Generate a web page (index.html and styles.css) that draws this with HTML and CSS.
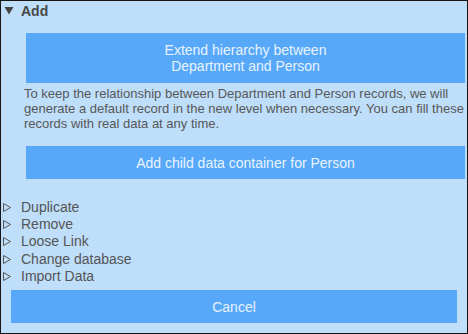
FILE: index.html
```html
<!DOCTYPE html>
<html>
<head>
<meta charset="utf-8">
<link rel="stylesheet" href="styles.css">
</head>
<body>
<div class="panel">
  <div class="section-head">
    <svg class="tri-down" width="11" height="9" viewBox="0 0 11 9"><polygon points="1.5,1 10.5,1 6,8.5" fill="#444"/></svg>
    <span>Add</span>
  </div>
  <div class="add-body">
    <button class="btn btn-tall">Extend hierarchy between<br>Department and Person</button>
    <p class="note">To keep the relationship between Department and Person records, we will generate a default record in the new level when necessary. You can fill these records with real data at any time.</p>
    <button class="btn btn-child">Add child data container for Person</button>
  </div>
  <ul class="actions">
    <li><svg class="tri-right" width="10" height="11" viewBox="0 0 10 11"><polygon points="1.5,1.5 8.5,5.5 1.5,9.5" fill="none" stroke="#555" stroke-width="1"/></svg>Duplicate</li>
    <li><svg class="tri-right" width="10" height="11" viewBox="0 0 10 11"><polygon points="1.5,1.5 8.5,5.5 1.5,9.5" fill="none" stroke="#555" stroke-width="1"/></svg>Remove</li>
    <li><svg class="tri-right" width="10" height="11" viewBox="0 0 10 11"><polygon points="1.5,1.5 8.5,5.5 1.5,9.5" fill="none" stroke="#555" stroke-width="1"/></svg>Loose Link</li>
    <li><svg class="tri-right" width="10" height="11" viewBox="0 0 10 11"><polygon points="1.5,1.5 8.5,5.5 1.5,9.5" fill="none" stroke="#555" stroke-width="1"/></svg>Change database</li>
    <li><svg class="tri-right" width="10" height="11" viewBox="0 0 10 11"><polygon points="1.5,1.5 8.5,5.5 1.5,9.5" fill="none" stroke="#555" stroke-width="1"/></svg>Import Data</li>
  </ul>
  <button class="btn btn-cancel">Cancel</button>
</div>
</body>
</html>
```

FILE: styles.css
```css
html, body {
  margin: 0;
  padding: 0;
}
body {
  font-family: "Liberation Sans", Arial, sans-serif;
}
.panel {
  width: 468px;
  height: 334px;
  box-sizing: border-box;
  border: 1px solid #151515;
  background: #bedefa;
  display: flex;
  flex-direction: column;
}
.section-head {
  display: flex;
  align-items: center;
  gap: 7px;
  padding: 1px 0 0 2px;
  height: 17px;
  font-size: 14px;
  font-weight: bold;
  color: #474747;
}
.tri-down {
  display: block;
}
.add-body {
  display: flex;
  flex-direction: column;
  padding: 14px 2px 0 23px;
}
.btn {
  display: block;
  border: none;
  background: #57a8f8;
  color: #e8f3ff;
  font-family: "Liberation Sans", Arial, sans-serif;
  font-size: 14px;
  line-height: 16px;
  text-align: center;
  padding: 0;
  margin: 0;
}
.btn-tall {
  margin-left: 2px;
  height: 50px;
}
.btn-child {
  margin-left: 2px;
  height: 33px;
}
.note {
  margin: 3px 0 15px 0;
  font-size: 13px;
  line-height: 15px;
  color: #585858;
}
.actions {
  list-style: none;
  margin: 19px 0 0 0;
  padding: 0 0 0 1px;
}
.actions li {
  display: flex;
  align-items: center;
  gap: 9px;
  height: 17.3px;
  font-size: 14px;
  color: #555;
}
.tri-right {
  display: block;
  flex: none;
  margin-top: 1px;
}
.btn-cancel {
  margin: 6px 10px 0 10px;
  height: 33px;
}
```
